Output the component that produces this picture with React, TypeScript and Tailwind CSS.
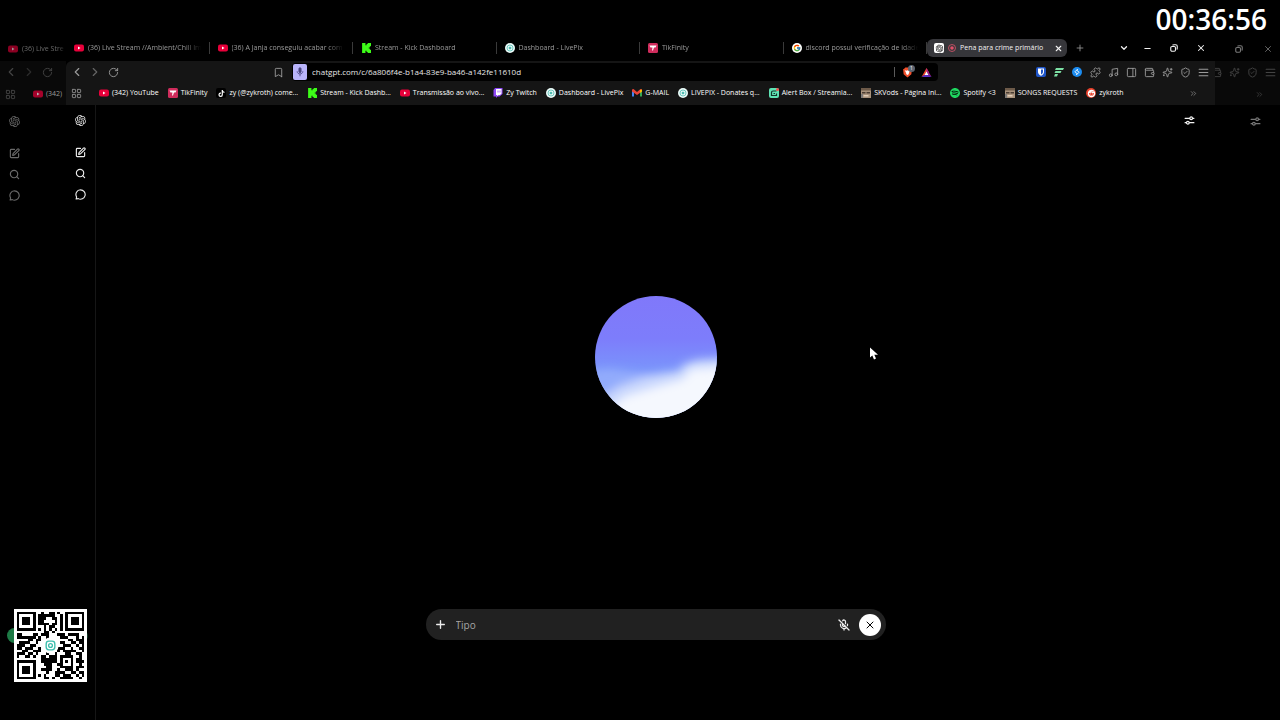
import { useState } from "react";
import type { ReactNode } from "react";
import {
  LuBookmark,
  LuCheck,
  LuChevronDown,
  LuChevronLeft,
  LuChevronRight,
  LuChevronsRight,
  LuLayoutGrid,
  LuMenu,
  LuMicOff,
  LuMinus,
  LuMusic,
  LuPanelRight,
  LuPlus,
  LuPuzzle,
  LuRotateCw,
  LuSearch,
  LuShield,
  LuSparkles,
  LuSquarePen,
  LuWallet,
  LuX,
} from "react-icons/lu";
import { FcGoogle } from "react-icons/fc";
import { RiOpenaiFill, RiSpotifyFill, RiRedditFill } from "react-icons/ri";
import { FaTiktok } from "react-icons/fa";

type Item = { id: string; label: string; icon: ReactNode };

// ---------- site icons ----------

function YoutubeIcon() {
  return (
    <svg viewBox="0 0 20 20" className="size-[10px] shrink-0">
      <rect x="0" y="3" width="20" height="14" rx="4" fill="#e8003a" />
      <path d="M8 7l5 3-5 3z" fill="#fff" />
    </svg>
  );
}

function KickIcon() {
  return (
    <svg viewBox="0 0 9 9" className="size-[10px] shrink-0">
      <path d="M1 0h3v2h1V1h1V0h3v3H8v1H7v1h1v1h1v3H6V8H5V7H4v2H1z" fill="#3dfc18" />
    </svg>
  );
}

function LivePixIcon() {
  return (
    <svg viewBox="0 0 20 20" className="size-[10px] shrink-0">
      <circle cx="10" cy="10" r="10" fill="#eafaf8" />
      <circle cx="10" cy="10" r="6" fill="none" stroke="#4fbdb3" strokeWidth="1.6" />
      <rect x="7.5" y="7.5" width="5" height="5" rx="1.5" fill="#4fbdb3" />
    </svg>
  );
}

function TikFinityIcon() {
  return (
    <svg viewBox="0 0 20 20" className="size-[10px] shrink-0">
      <rect width="20" height="20" rx="3" fill="#cf2c5c" />
      <path d="M3 5h14l-2 4h-3l-2 6H8l1-6H5z" fill="#fff" />
    </svg>
  );
}

function TiktokIcon() {
  return (
    <span className="flex size-[10px] shrink-0 items-center justify-center rounded-xs bg-black">
      <FaTiktok size={7} color="#fff" />
    </span>
  );
}

function TwitchIcon() {
  return (
    <svg viewBox="0 0 20 20" className="size-[10px] shrink-0">
      <path d="M4 0h15v12l-6 5h-4l-3 3v-3H1V4z" fill="#8d46f5" />
      <path d="M6 2h11v9l-3 3h-3l-3 2v-2H6z" fill="#fff" />
      <path d="M10 5v4M14 5v4" stroke="#8d46f5" strokeWidth="1.6" />
    </svg>
  );
}

function GmailIcon() {
  return (
    <svg viewBox="0 0 20 20" className="size-[10px] shrink-0">
      <path d="M0 4h4v13H0z" fill="#4285f4" />
      <path d="M16 4h4v13h-4z" fill="#34a853" />
      <path d="M0 3l3-1 7 6 7-6 3 1v4l-10 7L0 7z" fill="#ea4335" />
      <path d="M16 4l4-1v4l-4 3z" fill="#fbbc04" />
    </svg>
  );
}

function AlertBoxIcon() {
  return (
    <svg viewBox="0 0 20 20" className="size-[10px] shrink-0">
      <rect width="20" height="20" rx="4" fill="#5fe3b4" />
      <path d="M15 6H8a3 3 0 0 0-3 3v6h10v-4" fill="none" stroke="#12352b" strokeWidth="2.4" />
      <path d="M9 11h3" stroke="#12352b" strokeWidth="2" />
      <circle cx="17" cy="3" r="3" fill="#f0524f" />
    </svg>
  );
}

function PhotoIcon() {
  return (
    <svg viewBox="0 0 20 20" className="size-[10px] shrink-0">
      <rect width="20" height="20" fill="#a8927c" />
      <rect width="20" height="5" fill="#6d5a49" />
      <path d="M2 8h7v3H2zM11 8h7v3h-7z" fill="#4a3d33" />
      <path d="M5 14h10v3H5z" fill="#e0cdb8" />
      <path d="M0 12h4v8H0z" fill="#7d7a78" />
    </svg>
  );
}

function SpotifyIcon() {
  return (
    <span className="size-[10px] shrink-0 rounded-full bg-black">
      <RiSpotifyFill size={10} color="#1fd760" className="scale-120" />
    </span>
  );
}

function RedditIcon() {
  return (
    <span className="flex size-[10px] shrink-0 items-center justify-center rounded-full bg-[#e8402a]">
      <RiRedditFill size={9} color="#fff" />
    </span>
  );
}

function RecordIcon() {
  return (
    <svg viewBox="0 0 16 16" className="size-2 shrink-0">
      <circle cx="8" cy="8" r="7" fill="none" stroke="#c95468" strokeWidth="1.8" />
      <circle cx="8" cy="8" r="3.6" fill="#e0506a" />
    </svg>
  );
}

function BraveIcon() {
  return (
    <svg viewBox="0 0 20 20" className="size-[11px]">
      <path d="M6 1h8l2 2 2 1-1 9-7 6-7-6L2 4l2-1z" fill="#f0502c" />
      <path d="M5 6l3 1 2-1 2 1 3-1-2 4-1 3-2 1.500-2-1.500-1-3z" fill="#fff" />
    </svg>
  );
}

function RewardsIcon() {
  return (
    <svg viewBox="0 0 20 18" className="h-[9px] w-[11px]">
      <path d="M10 0l5 9h-5L6.500 14 0 18z" fill="#f0442c" />
      <path d="M10 0l10 18-6-4-4-7z" fill="#a01c8c" />
      <path d="M0 18l6-4h8l6 4z" fill="#5a2cc0" />
      <path d="M10 7l4 7H6z" fill="#fff" />
    </svg>
  );
}

function BitwardenIcon() {
  return (
    <svg viewBox="0 0 20 20" className="size-[10px]">
      <rect width="20" height="20" rx="4" fill="#1f55c8" />
      <path d="M4 3h12v7c0 4-3 6-6 7.500C7 16 4 14 4 10z" fill="#fff" />
      <path d="M10 5h4v5c0 2.500-2 4-4 5z" fill="#1f55c8" />
    </svg>
  );
}

function StripesIcon() {
  return (
    <svg viewBox="0 0 20 20" className="size-[10px]">
      <path d="M4 2h16l-2 4H2zM3 8h12l-2 4H1zM2 14h6l-2 5H0z" fill="#7ce0a4" />
    </svg>
  );
}

function ShazamIcon() {
  return (
    <svg viewBox="0 0 20 20" className="size-[10px]">
      <circle cx="10" cy="10" r="10" fill="#1c8cf0" />
      <path
        d="M11 5L7.500 7.500c-2 1.500-1.500 3 0 4l2 1M9 15l3.500-2.500c2-1.500 1.500-3 0-4l-2-1"
        fill="none"
        stroke="#fff"
        strokeWidth="2"
        strokeLinecap="round"
      />
    </svg>
  );
}

function VpnIcon() {
  return (
    <span className="relative flex">
      <LuShield size={11} />
      <LuCheck size={5} strokeWidth={4} className="absolute top-[3px] left-[3px]" />
    </span>
  );
}

function RestoreIcon() {
  return (
    <svg viewBox="0 0 16 16" className="size-2" fill="none" stroke="currentColor" strokeWidth="2.2">
      <rect x="1.500" y="5" width="9.500" height="9.500" rx="2.500" />
      <path d="M5 2.500C6 1.500 7 1.500 8 1.500h3.500a3 3 0 0 1 3 3V8c0 1 0 2-1 3" />
    </svg>
  );
}

function SettingsIcon() {
  return (
    <svg
      viewBox="0 0 20 20"
      className="size-[11px]"
      fill="none"
      stroke="currentColor"
      strokeWidth="2.2"
      strokeLinecap="round"
    >
      <path d="M2 6h8M16 6h2M2 14h2M10 14h8" />
      <circle cx="13" cy="6" r="2.500" />
      <circle cx="7" cy="14" r="2.500" />
    </svg>
  );
}

function ChatIcon() {
  return (
    <svg viewBox="0 0 20 20" className="size-[11px]" fill="none" stroke="currentColor" strokeWidth="2">
      <path d="M10 1.500a8.500 8.500 0 1 1-4 16l-4 .8 1-3.800a8.500 8.500 0 0 1 7-13z" strokeLinejoin="round" />
    </svg>
  );
}

// ---------- data ----------

const tabs: Item[] = [
  { id: "t1", label: "(36) Live Stream //Ambient/Chill Im", icon: <YoutubeIcon /> },
  { id: "t2", label: "(36) A Janja conseguiu acabar com", icon: <YoutubeIcon /> },
  { id: "t3", label: "Stream - Kick Dashboard", icon: <KickIcon /> },
  { id: "t4", label: "Dashboard - LivePix", icon: <LivePixIcon /> },
  { id: "t5", label: "TikFinity", icon: <TikFinityIcon /> },
  {
    id: "t6",
    label: "discord possui verificação de idade",
    icon: (
      <span className="flex size-[10px] shrink-0 items-center justify-center rounded-full bg-white">
        <FcGoogle size={8} />
      </span>
    ),
  },
];

const bookmarks: Item[] = [
  { id: "b1", label: "(342) YouTube", icon: <YoutubeIcon /> },
  { id: "b2", label: "TikFinity", icon: <TikFinityIcon /> },
  { id: "b3", label: "zy (@zykroth) come...", icon: <TiktokIcon /> },
  { id: "b4", label: "Stream - Kick Dashb...", icon: <KickIcon /> },
  { id: "b5", label: "Transmissão ao vivo...", icon: <YoutubeIcon /> },
  { id: "b6", label: "Zy Twitch", icon: <TwitchIcon /> },
  { id: "b7", label: "Dashboard - LivePix", icon: <LivePixIcon /> },
  { id: "b8", label: "G-MAIL", icon: <GmailIcon /> },
  { id: "b9", label: "LIVEPIX - Donates q...", icon: <LivePixIcon /> },
  { id: "b10", label: "Alert Box / Streamla...", icon: <AlertBoxIcon /> },
  { id: "b11", label: "SKVods - Página Ini...", icon: <PhotoIcon /> },
  { id: "b12", label: "Spotify <3", icon: <SpotifyIcon /> },
  { id: "b13", label: "SONGS REQUESTS", icon: <PhotoIcon /> },
  { id: "b14", label: "zykroth", icon: <RedditIcon /> },
];

const extensions: Item[] = [
  { id: "e1", label: "Bitwarden", icon: <BitwardenIcon /> },
  { id: "e2", label: "Stripes", icon: <StripesIcon /> },
  { id: "e3", label: "Shazam", icon: <ShazamIcon /> },
  { id: "e4", label: "Extensões", icon: <LuPuzzle size={11} /> },
  { id: "e5", label: "Mídia", icon: <LuMusic size={11} /> },
  { id: "e6", label: "Painel", icon: <LuPanelRight size={11} /> },
  { id: "e7", label: "Carteira", icon: <LuWallet size={11} /> },
  { id: "e8", label: "Leo", icon: <LuSparkles size={11} /> },
  { id: "e9", label: "VPN", icon: <VpnIcon /> },
  { id: "e10", label: "Menu", icon: <LuMenu size={13} /> },
];

const qrRows = [
  "1111111001001101001111111",
  "1000001011111100101000001",
  "1011101011100110101011101",
  "1011101011000010101011101",
  "1011101011110110101011101",
  "1000001000101100101000001",
  "1111111010101010101111111",
  "0000000000110100000000000",
  "1100001101110001110111100",
  "1111111010010000111000101",
  "0000110110000000000110111",
  "0111100100000000110011011",
  "1110011000000000011100101",
  "1101110010000001110010011",
  "0011001110000001011111001",
  "1110110100010010001100110",
  "1001101001101110111110010",
  "0000000001111110100010110",
  "1111111001111110101010111",
  "1000001000111001100010010",
  "1011101000011000111110111",
  "1011101001111001001110100",
  "1011101000010011110011011",
  "1000001010100011011100101",
  "1111111000110100111110010",
];

// ---------- parts ----------

function IconButton({ label, className = "", children }: { label: string; className?: string; children: ReactNode }) {
  return (
    <button aria-label={label} className={"flex w-[18px] shrink-0 items-center justify-center " + className}>
      {children}
    </button>
  );
}

function SideNav() {
  return (
    <nav className="flex flex-col items-center gap-[10px] pt-[9px]">
      <a href="#" aria-label="ChatGPT" className="mb-[10px]">
        <RiOpenaiFill size={13} />
      </a>
      <button aria-label="Novo chat">
        <LuSquarePen size={11} strokeWidth={2.5} />
      </button>
      <button aria-label="Buscar">
        <LuSearch size={11} strokeWidth={2.5} />
      </button>
      <button aria-label="Chats">
        <ChatIcon />
      </button>
    </nav>
  );
}

function NavButtons() {
  return (
    <div className="flex items-center">
      <IconButton label="Voltar">
        <LuChevronLeft size={14} />
      </IconButton>
      <IconButton label="Avançar">
        <LuChevronRight size={14} className="opacity-60" />
      </IconButton>
      <IconButton label="Recarregar">
        <LuRotateCw size={11} />
      </IconButton>
    </div>
  );
}

function Tab({ tab }: { tab: Item }) {
  return (
    <button className="flex h-full min-w-0 flex-1 items-center gap-1 pl-2 text-left">
      {tab.icon}
      <span className="mr-1 min-w-0 flex-1 overflow-hidden mask-r-from-85% whitespace-nowrap">{tab.label}</span>
      <span className="h-3 w-px bg-[#3a3a3a]" />
    </button>
  );
}

function AddressBar() {
  const [url, setUrl] = useState("chatgpt.com/c/6a806f4e-b1a4-83e9-ba46-a142fe11610d");
  return (
    <div className="flex h-[18px] w-[646px] shrink items-center rounded-sm bg-black pr-1">
      <button aria-label="Microfone" className="ml-px flex h-4 w-[14px] items-center justify-center rounded-xs bg-[#b9b4fb]">
        <svg viewBox="0 0 10 14" className="h-[10px] w-2" fill="none" stroke="#4a4680" strokeWidth="1.200">
          <rect x="3.500" y="1" width="3" height="7" rx="1.500" fill="#4a4680" />
          <path d="M1 6c0 5 8 5 8 0M5 10v3" />
        </svg>
      </button>
      <input
        aria-label="Endereço"
        value={url}
        onChange={(e) => setUrl(e.target.value)}
        className="ml-[5px] min-w-0 flex-1 bg-transparent text-[8px] text-[#e6e6e6] outline-none"
      />
      <span className="h-[10px] w-px bg-[#5a5a5a]" />
      <button aria-label="Brave Shields" className="relative ml-[7px]">
        <BraveIcon />
        <span className="absolute -top-[2px] left-[6px] flex size-[7px] items-center justify-center rounded-full bg-[#5d6470] text-[5px] leading-none text-white">
          1
        </span>
      </button>
      <button aria-label="Rewards" className="mr-[2px] ml-2">
        <RewardsIcon />
      </button>
    </div>
  );
}

function QrCode() {
  return (
    <div className="absolute bottom-[38px] left-[7px] flex items-center">
      <span className="absolute left-0 size-[15px] -translate-y-2.5 rounded-full bg-[#1d7a45]" />
      <span className="absolute -right-px size-3 -translate-y-2.5 rounded-full bg-[#12402a]" />
      <svg viewBox="-1 -1 27 27" className="relative ml-[7px] size-[73px]" shapeRendering="crispEdges">
        <rect x="-1" y="-1" width="27" height="27" fill="#fff" />
        {qrRows.map((row, y) =>
          row.split("").map((c, x) => (c === "1" ? <rect key={x + "-" + y} x={x} y={y} width="1" height="1" /> : null))
        )}
        <g fill="none" stroke="#3cbfae" shapeRendering="auto">
          <circle cx="12.500" cy="12.500" r="2.500" fill="#fff" stroke="#fff" />
          <rect x="10.900" y="10.900" width="3.200" height="3.200" rx="1" strokeWidth="0.5" />
          <circle cx="12.500" cy="12.500" r="0.7" strokeWidth="0.5" />
        </g>
      </svg>
    </div>
  );
}

function Orb() {
  return (
    <svg viewBox="0 0 122 122" className="size-[122px]">
      <defs>
        <linearGradient id="sky" x1="0" y1="0" x2="0" y2="1">
          <stop offset="0" stopColor="#8078fa" />
          <stop offset="0.35" stopColor="#7d7dfb" />
          <stop offset="0.6" stopColor="#7a94fb" />
          <stop offset="0.85" stopColor="#a9c0fb" />
        </linearGradient>
        <clipPath id="round">
          <circle cx="61" cy="61" r="61" />
        </clipPath>
        <filter id="soft" x="-30%" y="-30%" width="160%" height="160%">
          <feGaussianBlur stdDeviation="5" />
        </filter>
      </defs>
      <g clipPath="url(#round)">
        <rect width="122" height="122" fill="url(#sky)" />
        <g filter="url(#soft)">
          <path d="M-20 76l36-3 40 7v30H-20z" fill="#92abfc" />
          <path d="M-10 112l34-22 28-10 32-5 4-6 14-5 30-2v90H-10z" fill="#c9d7fd" />
        </g>
        <g filter="url(#soft)">
          <path d="M0 124l30-24 30-9 28-8 8-10 50-4v80H0z" fill="#f5f8fe" />
        </g>
      </g>
    </svg>
  );
}

function Composer() {
  const [text, setText] = useState("");
  return (
    <form
      onSubmit={(e) => e.preventDefault()}
      className="flex h-[31px] w-[460px] items-center rounded-full bg-[#212121] pr-[5px] pl-2 text-[#ececec]"
    >
      <button type="button" aria-label="Adicionar">
        <LuPlus size={13} strokeWidth={2.5} />
      </button>
      <input
        aria-label="Mensagem"
        placeholder="Tipo"
        value={text}
        onChange={(e) => setText(e.target.value)}
        className="ml-[9px] min-w-0 flex-1 bg-transparent text-[10px] outline-none placeholder:text-[#a6a6a6]"
      />
      <button type="button" aria-label="Ativar microfone" className="mr-[9px]">
        <LuMicOff size={12} strokeWidth={2.5} />
      </button>
      <button type="button" aria-label="Encerrar" className="flex size-[22px] items-center justify-center rounded-full bg-white text-black">
        <LuX size={12} />
      </button>
    </form>
  );
}

// strip of the inactive window on the left
function BackWindowLeft() {
  return (
    <aside className="w-[66px] shrink-0 overflow-hidden text-[#6a6a6a]">
      <div className="flex h-[23px] items-center gap-1 pb-px pl-2">
        <span className="flex opacity-60">
          <YoutubeIcon />
        </span>
        <span className="min-w-0 flex-1 mask-r-from-80% whitespace-nowrap">(36) Live Stre</span>
      </div>
      <div className="flex h-[22px] items-center bg-[#090909] pl-[2px] text-[#444]">
        <NavButtons />
      </div>
      <div className="flex h-[22px] items-center bg-[#090909] pl-[5px] text-[#444]">
        <LuLayoutGrid size={11} />
        <span className="ml-[17px] flex opacity-70">
          <YoutubeIcon />
        </span>
        <span className="ml-[3px] text-[#999]">(342)</span>
      </div>
      <div className="w-[28px] pt-px">
        <SideNav />
      </div>
    </aside>
  );
}

function BackWindowRight() {
  return (
    <aside className="w-[65px] shrink-0 overflow-hidden text-[#444]">
      <div className="flex h-[23px] items-center justify-end gap-5 pr-[7px] pb-px text-[#777]">
        <RestoreIcon />
        <LuX size={10} />
      </div>
      <div className="flex h-[22px] items-center justify-end bg-[#090909] pr-px">
        <IconButton label="Carteira">
          <LuWallet size={11} />
        </IconButton>
        <IconButton label="Leo">
          <LuSparkles size={11} />
        </IconButton>
        <IconButton label="VPN">
          <VpnIcon />
        </IconButton>
        <IconButton label="Menu">
          <LuMenu size={13} />
        </IconButton>
      </div>
      <div className="flex h-[22px] items-center justify-end bg-[#090909] pr-4">
        <LuChevronsRight size={9} />
      </div>
      <div className="flex justify-end pt-[11px] pr-[19px] text-[#777]">
        <SettingsIcon />
      </div>
    </aside>
  );
}

function FrontWindow() {
  return (
    <section className="flex min-w-0 flex-1 flex-col">
      <div className="flex h-[23px] items-center pb-[3px] text-[#9a9a9a]">
        <div className="flex h-full w-[861px] min-w-0 shrink">
          {tabs.map((tab) => (
            <Tab key={tab.id} tab={tab} />
          ))}
        </div>
        <div className="flex h-[18px] w-[140px] shrink-0 items-center gap-1 rounded-md bg-[#36363a] pr-1 pl-[7px] text-[#f2f2f2]">
          <span className="flex size-[10px] items-center justify-center rounded-xs bg-white text-black">
            <RiOpenaiFill size={9} />
          </span>
          <RecordIcon />
          <button className="flex-1 text-left whitespace-nowrap">Pena para crime primário</button>
          <button aria-label="Fechar aba">
            <LuX size={9} strokeWidth={3} />
          </button>
        </div>
        <IconButton label="Nova aba" className="ml-1">
          <LuPlus size={10} />
        </IconButton>
        <div className="flex flex-1 items-center justify-end text-[#f2f2f2]">
          <IconButton label="Buscar abas">
            <LuChevronDown size={10} strokeWidth={3} />
          </IconButton>
          <IconButton label="Minimizar" className="ml-[5px]">
            <LuMinus size={9} strokeWidth={3} />
          </IconButton>
          <IconButton label="Restaurar" className="mx-[9px]">
            <RestoreIcon />
          </IconButton>
          <IconButton label="Fechar" className="mr-[5px]">
            <LuX size={10} strokeWidth={2.5} />
          </IconButton>
        </div>
      </div>

      <div className="rounded-tl-md bg-[#151515]">
        <div className="flex h-[22px] items-center pr-[3px] pl-[2px] text-[#9a9a9a]">
          <NavButtons />
          <div className="flex flex-1 items-center justify-end">
            <IconButton label="Favoritar" className="mr-[5px]">
              <LuBookmark size={11} />
            </IconButton>
            <AddressBar />
          </div>
          <div className="ml-[94px] flex shrink-0 items-center">
            {extensions.map((ext) => (
              <IconButton key={ext.id} label={ext.label}>
                {ext.icon}
              </IconButton>
            ))}
          </div>
        </div>
        <div className="flex h-[22px] items-center pr-[17px] pb-[2px] pl-[5px] text-white">
          <LuLayoutGrid size={11} className="shrink-0 text-[#8a8a8a]" />
          <div className="ml-[17px] flex min-w-0 flex-1 items-center gap-[9px] overflow-hidden">
            {bookmarks.map((b) => (
              <a key={b.id} href="#" className="flex shrink-0 items-center gap-[3px] whitespace-nowrap">
                {b.icon}
                {b.label}
              </a>
            ))}
          </div>
          <LuChevronsRight size={9} className="text-[#8a8a8a]" />
        </div>
      </div>

      <div className="flex flex-1">
        <div className="w-[30px] shrink-0 border-r border-[#161616] text-[#ececec]">
          <SideNav />
        </div>
        <main className="flex flex-1 flex-col items-center">
          <button aria-label="Configurações" className="mt-[10px] mr-5 self-end text-[#f2f2f2]">
            <SettingsIcon />
          </button>
          <div className="flex flex-1 items-center pb-[21px]">
            <Orb />
          </div>
          <div className="pb-20">
            <Composer />
          </div>
        </main>
      </div>
    </section>
  );
}

export default function App() {
  return (
    <div className="relative flex min-h-screen flex-col bg-black font-['Open_Sans','Noto_Sans',sans-serif] text-[7px] leading-3">
      <header className="flex h-[38px] items-center justify-end pr-[13px]">
        <time className="text-[28px] leading-8 font-semibold text-white">00:36:56</time>
      </header>
      <div className="flex flex-1">
        <BackWindowLeft />
        <FrontWindow />
        <BackWindowRight />
      </div>
      <QrCode />
      <svg viewBox="0 0 12 18" className="absolute top-[347px] left-[870px] h-[13px] w-2">
        <path d="M0 0v15l3.500-3 2.500 6 3-1.500-2.500-5.500H12z" fill="#fff" />
      </svg>
    </div>
  );
}
